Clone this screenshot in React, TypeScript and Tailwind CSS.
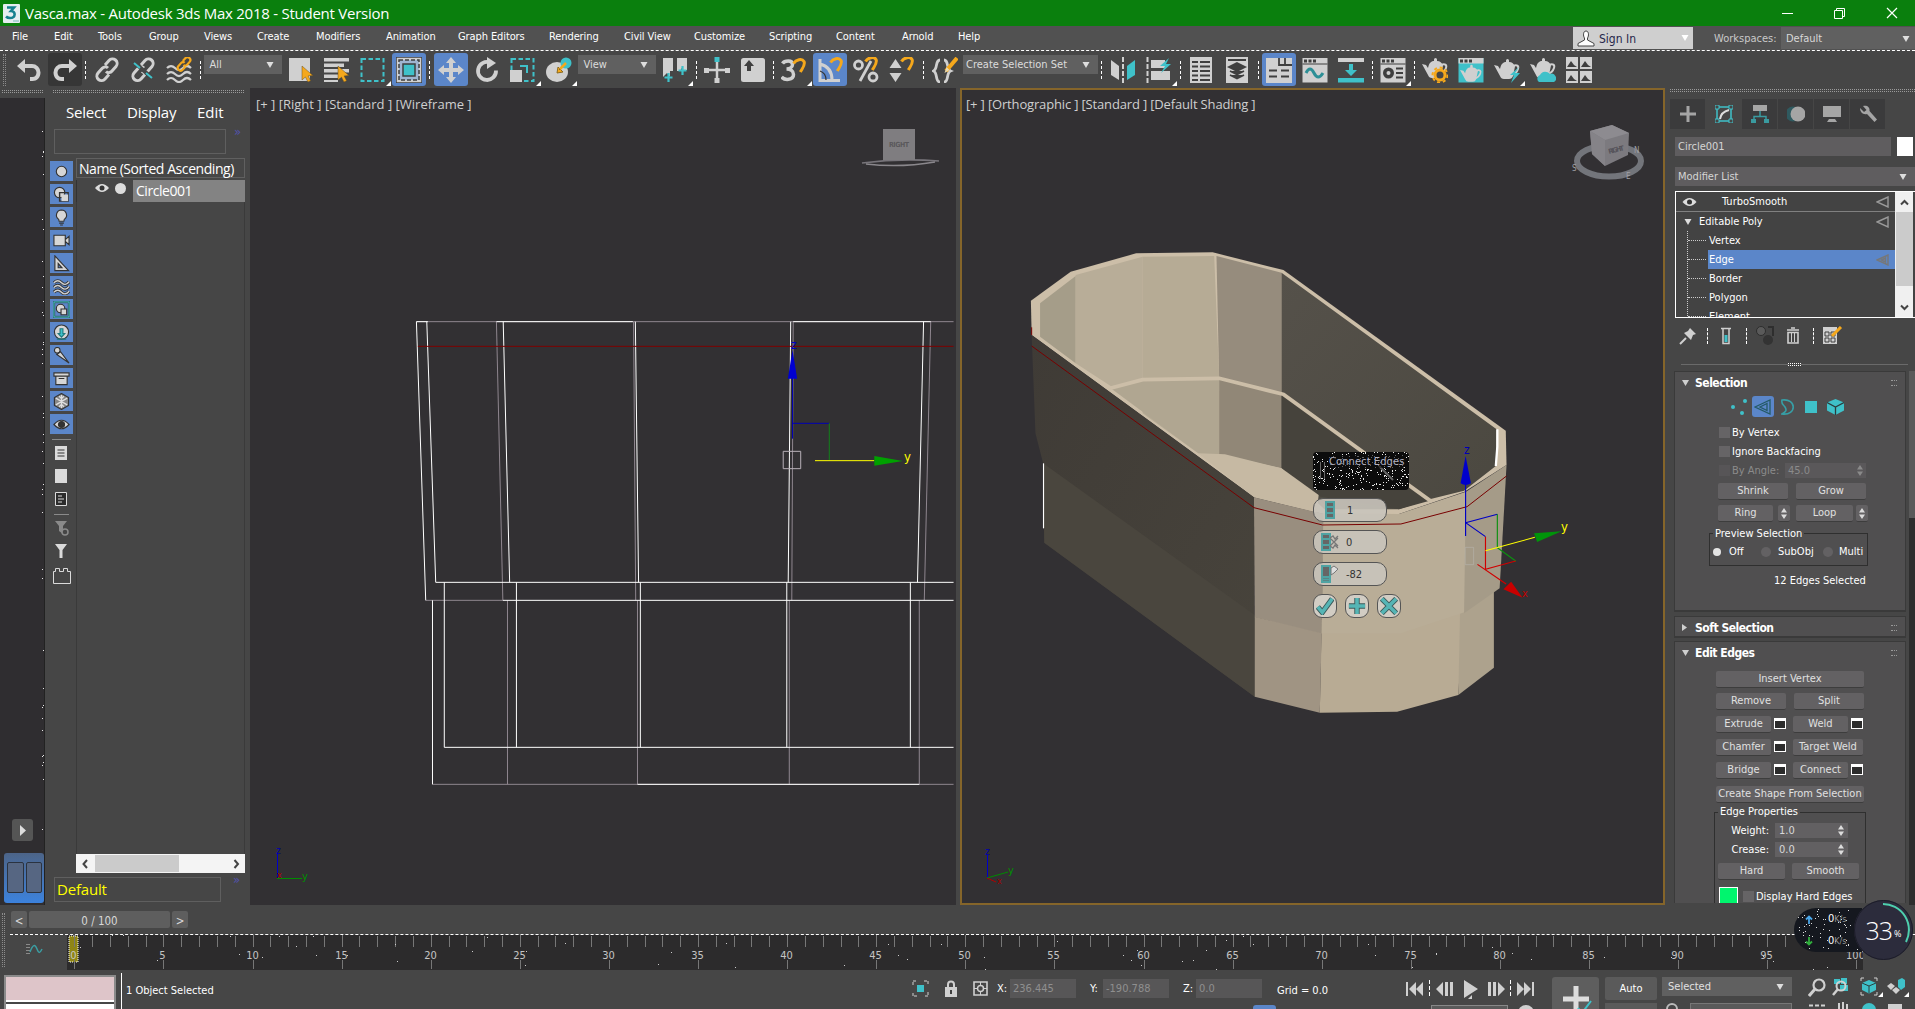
import React from "react";

type Kids = { children?: React.ReactNode; className?: string };

const G = "#d0d0d0";
const T = "#3fc1c9";
const O = "#f5a81c";
const D = "#3f3f3f";

/* ---------- toolbar helpers ---------- */

function Ico({ children, on, dark, fly }: { children: React.ReactNode; on?: boolean; dark?: boolean; fly?: boolean }) {
  return (
    <div className="relative flex w-9 shrink-0 items-center justify-center">
      <div
        className={
          "flex h-[33px] w-[34px] items-center justify-center rounded-[3px] " +
          (on ? "bg-[#5b86c9]" : dark ? "bg-[#363636]" : "")
        }
      >
        <svg width="26" height="26" viewBox="0 0 26 26" fill="none">
          {children}
        </svg>
      </div>
      {fly && (
        <svg className="absolute right-0 bottom-0" width="5" height="5" viewBox="0 0 5 5">
          <path d="M5 0V5H0Z" fill="#fff" />
        </svg>
      )}
    </div>
  );
}

function Sep({ className = "w-1.5" }: { className?: string }) {
  return (
    <div className={"flex shrink-0 justify-center " + className}>
      <div className="h-[18px] border-l border-dashed border-white" />
    </div>
  );
}

function Drop({ label, className }: { label: string; className: string }) {
  return (
    <div className={"mb-2.5 flex h-[19px] shrink-0 items-center justify-between bg-[#606060] pr-2 text-[#dcdcdc] " + className}>
      <span className="whitespace-nowrap">{label}</span>
      <Caret />
    </div>
  );
}

function Caret({ color = "#dedede" }: { color?: string }) {
  return (
    <svg width="8" height="6" viewBox="0 0 8 6" className="shrink-0">
      <path d="M0.5 0H7.5L4 6Z" fill={color} />
    </svg>
  );
}

const Cursor = () => <path d="M14 9v14l3.4-3 2.6 5 2.6-1.3-2.5-4.8 4.7-.5z" fill={O} stroke="#6b5220" strokeWidth=".5" />;
const Magnet = ({ x = 0, y = 0 }: { x?: number; y?: number }) => (
  <path
    transform={`translate(${x} ${y})`}
    d="M12.5 5.5C15 1.5 21 0 23 3.5c1.600 3.200-1 6-3.700 10.500"
    stroke={O}
    strokeWidth="3"
  />
);
const Teapot = ({ fill = G, y = 0 }: { fill?: string; y?: number }) => (
  <g transform={`translate(0 ${y})`}>
    <path d="M0 7l4 1 2 3C7 6 9 4 12 4V2.500a1.500 1.500 0 0 1 3 0V4c3 0 5 2 6 4.500L19 18q-1 3-4 3H10q-3 0-4-3z" fill={fill} />
    <path d="M19 8c4-2 6 0 5 3s-3 5-6 6" stroke={fill} strokeWidth="2" />
  </g>
);
const Chain = ({ color = G }: { color?: string }) => (
  <g stroke={color} strokeWidth="3">
    <path d="M11 8l4-4.500a4.500 4.500 0 0 1 7 6L18 14a4 4 0 0 1-6 .500" />
    <path d="M15 17.500l-4 4.500a4.500 4.500 0 0 1-7-6L8 11.500a4 4 0 0 1 6-.500" />
  </g>
);
const PanelTop = () => (
  <>
    <path d="M0.500 1h25v24.500h-25z" fill={G} />
    <path d="M2 2.500h3v3H2zM6.500 2.500h3v3h-3zM11 2.500h3v3h-3z" fill={D} />
    <path d="M0.500 7h25" stroke={D} />
  </>
);

function Toolbar() {
  return (
    <div className="flex h-[37px] shrink-0 items-center bg-[#464646]">
      <div className="ml-[3px] h-[32px] w-[3px] border-x border-dotted border-[#8c8c8c]" />
      <div className="w-[4.500px]" />
      <Ico><path d="M1 9l8-7v5h7a8.500 8.500 0 0 1 8.500 8.500c0 5-3.500 8.500-8 8.500H14v-4h2.500c2.500 0 4-2 4-4.500S18.500 11 16 11H9v5z" fill={G} /></Ico>
      <Ico dark><path d="M25 9l-8-7v5h-7A8.500 8.500 0 0 0 1.500 15.500c0 5 3.500 8.500 8 8.500H12v-4H9.500c-2.500 0-4-2-4-4.500S7.500 11 10 11h7v5z" fill={G} /></Ico>
      <Sep />
      <Ico><Chain /></Ico>
      <Ico><Chain /><path d="M4 5l18 16" stroke="#464646" strokeWidth="4" /><path d="M4 6l6 5M16 16l6 5" stroke={T} strokeWidth="2" /></Ico>
      <Ico>
        <path d="M1 11q4-4 8 0t8 0 8 0M1 17q4-4 8 0t8 0 8 0M1 23q4-4 8 0t8 0 8 0" stroke={G} strokeWidth="2.200" />
        <g transform="translate(10 -1) scale(.62)" stroke={O} strokeWidth="3.500"><path d="M11 8l4-4.500a4.500 4.500 0 0 1 7 6L18 14a4 4 0 0 1-6 .500M15 17.500l-4 4.500a4.500 4.500 0 0 1-7-6L8 11.500a4 4 0 0 1 6-.500" /></g>
      </Ico>
      <Sep className="w-[7px]" />
      <Drop label="All" className="mr-px w-[78px] pl-1.5" />
      <Ico><path d="M1 1h21v23H1z" fill={G} /><Cursor /></Ico>
      <Ico><path d="M0 1h25v3.500H0zM0 6.500h20V10H0zM0 12h25v3.500H0zM0 17.500h17V21H0zM0 23h14v2H0z" fill={G} /><Cursor /></Ico>
      <Ico fly><rect x="1.500" y="2" width="22" height="22" stroke={T} strokeWidth="2" strokeDasharray="4.500 2.500" /></Ico>
      <Ico on><rect x="0" y="0" width="26" height="26" fill={G} stroke={D} strokeWidth="1.500" /><rect x="3" y="3" width="20" height="20" fill="#9fb4d0" stroke={D} strokeWidth="1.500" strokeDasharray="4 2" /><rect x="7" y="7" width="12" height="12" fill={T} stroke={D} strokeWidth="1.500" /></Ico>
      <Sep />
      <Ico on><path d="M13 0l5 6h-3v5h5V8l6 5-6 5v-3h-5v5h3l-5 6-5-6h3v-5H6v3l-6-5 6-5v3h5V6H8z" fill={G} /></Ico>
      <Ico><path d="M16 5.500A9 9 0 1 0 22 13.500" stroke={G} strokeWidth="3.800" /><path d="M13 0l9 6-9 6z" fill={G} /></Ico>
      <Ico fly><rect x="1.500" y="2" width="22" height="22" stroke={T} strokeWidth="2" strokeDasharray="4.500 2.500" /><rect x="0" y="13" width="12" height="12" fill={G} /><path d="M10 9h7v7" stroke={T} strokeWidth="2" /></Ico>
      <Ico fly><ellipse cx="11" cy="15" rx="11" ry="10" fill={G} /><circle cx="20" cy="6" r="5.500" fill={T} /><path d="M20 6l-7 7M11 16l1-6 5 5z" stroke="#8a6a20" strokeWidth="1" fill={O} /><path d="M20 6l-6 6" stroke={O} strokeWidth="2.500" /></Ico>
      <Drop label="View" className="mr-[1.500px] ml-px w-[78px] pl-1.5" />
      <Ico fly><path d="M1 1h10v13H8v6l-3-4-4 4zM15 1h10v12h-4v-4l-3 5h-3z" fill={G} /><path d="M6.500 16v9M2.500 20.500h8M20.500 9v9M16.500 13.500h8" stroke={T} strokeWidth="2.200" /></Ico>
      <Sep />
      <Ico><path d="M13 5v16M3 13h20" stroke={G} strokeWidth="2.500" /><path d="M0 11h5v5H0zM21 11h5v5h-5zM10.500 21h5v5h-5z" fill={G} /><path d="M10.500 0h5v5h-5z" fill={T} /></Ico>
      <Ico><rect x="1" y="1" width="24" height="24" rx="2.500" fill={G} /><path d="M9 3l5 6h-3v5H7V9H4z" fill={D} /></Ico>
      <Sep className="w-[5px]" />
      <Ico fly><path d="M1.500 6.500c2-3 10-4 10 1 0 3-3 4.500-6 4.500 4 0 7 2 7 5.500 0 6-9 6-12 2.500" stroke={G} strokeWidth="3.500" /><Magnet y={1} /></Ico>
      <Ico on><path d="M3 2v21.500h20M3 7q12 3 12 16" stroke={G} strokeWidth="3" /><path d="M3 14q6 2 6 9" stroke="#333" strokeWidth="1.200" /><Magnet x={1} /></Ico>
      <Ico><circle cx="5.500" cy="8" r="4" stroke={G} strokeWidth="2.800" /><circle cx="20" cy="20" r="4" stroke={G} strokeWidth="2.800" /><path d="M18 4L7 24" stroke={G} strokeWidth="2.800" /><Magnet y={-1} /></Ico>
      <Ico><path d="M6.500 2l6 9h-12zM6.500 25l6-9h-12z" fill={G} /><Magnet y={-1} /></Ico>
      <Sep className="w-[7px]" />
      <Ico><path d="M8 3C3 3 6 12 1.500 14 6 16 3 25 8 25M12 3c5 0 2 9 6.500 11C14 16 17 25 12 25" stroke={G} strokeWidth="2.800" /><path d="M25 1L14 14" stroke={O} strokeWidth="4" /><path d="M14.500 10l-2 6 5-3z" fill="#e8d9b0" /></Ico>
      <Drop label="Create Selection Set" className="w-[135px] pl-[3px]" />
      <Sep className="w-[7px]" />
      <Ico><path d="M1 3l8 6v14l-8-5z" fill={G} /><path d="M13 0v26" stroke={G} strokeWidth="2" strokeDasharray="5 2" /><path d="M25 3l-8 6v14l8-5z" fill={T} /></Ico>
      <Ico fly><path d="M1.500 0v26" stroke={G} strokeWidth="2" strokeDasharray="5 2" /><path d="M5 3h14v8H5zM5 14h19v9H5z" fill={G} /><path d="M23 1l-9 8h5l-4 7 10-9h-5z" fill={T} /></Ico>
      <Sep />
      <Ico><path d="M2 0h22v26H2z" fill={G} /><path d="M4 5h6M12 5h10M4 9.500h6M12 9.500h10M4 14h6M12 14h10M4 18.500h6M12 18.500h10M4 23h6M12 23h10" stroke={D} strokeWidth="1.800" /></Ico>
      <Ico><path d="M2 0h22v26H2z" fill={G} /><path d="M4 3h18M13 6l8 4-8 4-8-4zM6 14l7 3.500L20 14M6 18l7 3.500L20 18" stroke={D} strokeWidth="1.800" fill={D} /></Ico>
      <Sep />
      <Ico on><path d="M0 1h26v25H0z" fill={G} /><path d="M13 1v7h13M19 1v7M3 13.500h8M15 13.500h8M3 19.500h8M15 19.500h8" stroke={D} strokeWidth="1.800" /></Ico>
      <Ico><PanelTop /><path d="M4 16q4-8 8 0 4 8 9 0" stroke="#2d8f96" strokeWidth="3" /></Ico>
      <Ico><path d="M0 1h26v4H0z" fill={G} /><path d="M0 21h26v4.500H0zM11 7h4v6h4l-6 6-6-6h4z" fill={T} /></Ico>
      <Sep />
      <Ico fly><PanelTop /><circle cx="8.500" cy="16" r="5.500" fill={D} /><circle cx="8.500" cy="16" r="2" fill={G} /><path d="M16 11.500h7M16 16h7M16 20.500h7" stroke={D} strokeWidth="2" /></Ico>
      <Sep />
      <Ico><Teapot /><circle cx="18" cy="18" r="5" stroke={O} strokeWidth="3" fill="#464646" /><circle cx="18" cy="18" r="7.500" stroke={O} strokeWidth="2" strokeDasharray="3 2.800" /></Ico>
      <Ico><path d="M0.500 1h25v24.500h-25z" fill={T} /><path d="M0.500 1h25v5.500h-25z" fill={G} /><path d="M2 2.500h3v3H2zM6.500 2.500h3v3h-3zM11 2.500h3v3h-3z" fill={D} /><g transform="translate(2 7) scale(.85)"><Teapot /></g></Ico>
      <Ico fly><Teapot y={1} /><path d="M25 10l-9 8h4l-3 8 9-10h-5z" fill={T} /></Ico>
      <Ico><Teapot /><path d="M9 25a4 4 0 0 1 1-7 6 6 0 0 1 10-1 4.500 4.500 0 0 1 4 8z" fill={T} /></Ico>
      <Ico><path d="M0 0h12v12H0zM14 0h12v12H14zM0 14h12v12H0zM14 14h12v12H14z" fill={G} /><path d="M1 10l4-6 3 4 3 2zM15 10l4-6 3 4 3 2zM1 24l4-6 3 4 3 2zM15 24l4-6 3 4 3 2z" fill={D} /></Ico>
    </div>
  );
}

/* ---------- title and menu ---------- */

function TitleBar() {
  return (
    <div className="flex h-[26px] shrink-0 items-center bg-[#0a7f0d] text-white">
      <svg width="17" height="19" viewBox="0 0 17 19" className="ml-[3px]">
        <rect width="17" height="19" rx="1" fill="#e4eef0" />
        <path d="M4 3.500h7l-3 3.500c5 0 5 7-1 7-2 0-3-.500-4-1.500" stroke="#15808f" strokeWidth="2.600" fill="none" />
        <path d="M10 17h6" stroke="#7bb" />
      </svg>
      <span className="ml-[5px] font-['Open_Sans','Noto_Sans',sans-serif] text-[15px] tracking-[-0.250px] whitespace-nowrap">
        Vasca.max - Autodesk 3ds Max 2018 - Student Version
      </span>
      <div className="mr-[17px] ml-auto flex items-center gap-[41px]">
        <svg width="11" height="11"><path d="M0 5.500h11" stroke="#fff" /></svg>
        <svg width="11" height="11" fill="none" stroke="#fff"><path d="M.5 2.500h8v8h-8zM2.500 2.500v-2h8v8h-2" /></svg>
        <svg width="12" height="12"><path d="M1 1l10 10M11 1L1 11" stroke="#fff" strokeWidth="1.200" /></svg>
      </div>
    </div>
  );
}

function MenuBar() {
  const items: [string, string][] = [
    ["File", "w-[42px]"], ["Edit", "w-[44px]"], ["Tools", "w-[51px]"], ["Group", "w-[55px]"], ["Views", "w-[53px]"],
    ["Create", "w-[59px]"], ["Modifiers", "w-[70px]"], ["Animation", "w-[72px]"], ["Graph Editors", "w-[91px]"],
    ["Rendering", "w-[75px]"], ["Civil View", "w-[70px]"], ["Customize", "w-[75px]"], ["Scripting", "w-[67px]"],
    ["Content", "w-[66px]"], ["Arnold", "w-[56px]"], ["Help", "w-[22px]"],
  ];
  return (
    <div className="flex h-[25px] shrink-0 items-center border-b border-dashed border-white bg-[#515151] pl-3 text-white">
      {items.map(([t, w]) => (
        <span key={t} className={"shrink-0 pb-0.5 tracking-[-0.100px] whitespace-nowrap " + w}>{t}</span>
      ))}
      <div className="mr-[21px] ml-auto flex h-[22px] w-[120px] items-center bg-[#cfcfcf] pl-1 text-[12px] text-[#26264a]">
        <svg width="18" height="17" viewBox="0 0 18 17" fill="#fff" stroke="#444" strokeWidth="1"><path d="M9 1c-3 0-3 5-1.500 7v2L1 13.500V16h16v-2.500L10.500 10V8C12 6 12 1 9 1z" /></svg>
        <span className="mt-0.5 ml-1">Sign In</span>
        <span className="mr-1 ml-auto"><Caret color="#fff" /></span>
      </div>
      <span className="mt-0.5 w-[67px] text-[#c9c9c9]">Workspaces:</span>
      <div className="flex h-[22px] w-[134px] items-center justify-between bg-[#606060] pt-0.5 pr-[5px] pl-[5px] text-[#d8d8d8]">
        Default <Caret />
      </div>
    </div>
  );
}

/* ---------- scene explorer ---------- */

const filterIcons: React.ReactNode[] = [
  <circle cx="9" cy="9" r="5.500" />,
  <><circle cx="7" cy="7" r="5.500" /><path d="M7 7h9v9H7z" fill="none" stroke="#333" strokeWidth="1.500" /><path d="M9 9h7v7H9z" stroke="none" /></>,
  <path d="M9 1a5.500 5.500 0 0 0-3 10l.5 2h5l.5-2a5.500 5.500 0 0 0-3-10zM6.500 15h5M7.500 17h3" />,
  <path d="M1 3.500h12v11H1zM13 8l4-3.500v9L13 10z" />,
  <path d="M2 1l14.500 15.500H2zM5.500 9v4.500h4z" fillRule="evenodd" />,
  <><path d="M1 5q4-4 8 0t8-1M1 10q4-4 8 0t8-1M1 15q4-4 8 0t8-1" fill="none" stroke="#333" strokeWidth="3.400" /><path d="M1 5q4-4 8 0t8-1M1 10q4-4 8 0t8-1M1 15q4-4 8 0t8-1" fill="none" stroke="#d0d0d0" strokeWidth="1.500" /></>,
  <><rect x="1" y="1" width="16" height="16" fill="#5b86c9" stroke="#333" strokeWidth="2.500" /><rect x="1" y="1" width="16" height="16" fill="none" stroke={T} strokeWidth="1.300" /><circle cx="8" cy="8" r="4.500" /><path d="M8.500 8.500h6v6h-6z" /></>,
  <><circle cx="9" cy="8.500" r="7.500" /><path d="M7.500 5h3v5h2L9 14l-3.500-4h2zM4 16h10" fill={T} stroke="#1f7a80" /></>,
  <><circle cx="4.500" cy="3.500" r="3" /><path d="M4 8l4-3 9 12z" /></>,
  <path d="M1 3h16v3.500H1zM3 6.500h12v9H3zM6 9h6" />,
  <><path d="M9 .5l7.500 4.300v8.400L9 17.500 1.500 13.200V4.800z" fill="#888" stroke="#333" /><path d="M9 2v14M3 5.500l12 7M15 5.500l-12 7M6.500 3.500L9 6l2.500-2.500M6.500 14.500L9 12l2.500 2.500" fill="none" stroke="#e0e0e0" strokeWidth="1.400" /></>,
  <><path d="M1 9q8-9 16 0-8 9-16 0z" /><circle cx="9" cy="9" r="3.200" fill="#333" /></>,
];

function Explorer() {
  return (
    <div className="flex w-[205px] shrink-0 flex-col bg-[#464646] text-white">
      <div className="mt-[2px] ml-2 h-[3px] w-[191px] border-y border-dotted border-[#9a9a9a]" />
      <div className="mt-[7px] mb-[2px] flex h-6 items-center gap-[21px] pl-[21px] text-[15px] font-['Open_Sans','Noto_Sans',sans-serif]">
        <span className="w-[40px] tracking-[-0.200px]">Select</span><span className="w-[49px] tracking-[-0.200px]">Display</span><span>Edit</span>
      </div>
      <div className="mt-[3px] flex h-[25px] pl-[9px]">
        <div className="w-[172px] border border-[#5f5f5f]" />
        <span className="-mt-1 ml-2 text-[13px] text-[#5252ac]">»</span>
      </div>
      <div className="mt-1 flex flex-1">
        <div className="flex w-[31px] flex-col items-start pt-[3px] pl-[5px]">
          {filterIcons.map((ic, i) => (
            <div key={i} className="mb-[3px] flex h-5 w-[23px] shrink-0 items-center justify-center bg-[#5b86c9]">
              <svg width="17" height="17" viewBox="0 0 18 18" fill="#d6d6d6" stroke="#333" strokeWidth="1.200">{ic}</svg>
            </div>
          ))}
          <div className="mt-[2px] ml-[2px] h-px w-[19px] bg-[#8a8a8a]" />
          <svg className="mt-[5px] ml-1" width="15" height="149" viewBox="0 0 15 149" fill="none">
            <path d="M1 1h12v14H1zM1 24h12v14H1z" fill="#dadada" />
            <path d="M3.500 5h7M3.500 8h7M3.500 11h7" stroke="#333" />
            <path d="M1.500 47.500h11v13h-11z" stroke="#dadada" fill="#2c2c2c" />
            <path d="M4 51h4M4 54h6M4 57h4" stroke="#dadada" />
            <path d="M0 69.500h15" stroke="#8a8a8a" />
            <path d="M1 76h12l-4 5v8l-4-3v-5z" fill="#8a8a8a" /><circle cx="11" cy="87" r="3" stroke="#8a8a8a" strokeWidth="1.500" fill="#464646" />
            <path d="M1 99h12L8.500 105v8h-3v-8z" fill="#dadada" />
          </svg>
          <svg className="-mt-[27px] ml-[3px]" width="18" height="18" viewBox="0 0 18 18" fill="none" stroke="#dadada"><path d="M.5 4.500h2v-3h4v3h4v-3h4v3h3v12h-17z" /></svg>
        </div>
        <div className="flex w-[169px] flex-col font-['Open_Sans','Noto_Sans',sans-serif]">
          <div className="flex h-5 items-center border border-[#606060] pt-px pl-[2px] text-[14px] tracking-[-0.430px] whitespace-nowrap">Name (Sorted Ascending)</div>
          <div className="mt-[2px] flex h-[22px] items-center border-l border-[#333]">
            <svg className="mb-1.5 ml-[18px]" width="14" height="10" viewBox="0 0 14 10"><path d="M0 5q7-8 14 0-7 8-14 0z" fill="#ddd" /><circle cx="7" cy="5" r="2.500" fill="#333" /></svg>
            <div className="mb-1.5 ml-[6px] h-[11px] w-[11px] rounded-full bg-[#dcdcdc]" />
            <div className="ml-auto flex h-full w-[112px] items-center bg-[#838383] pl-[3px] text-[14px] tracking-[-0.450px]">Circle001</div>
          </div>
          <div className="flex-1 border-x border-[#3a3a3a]" />
          <div className="flex h-[19px] items-center bg-[#f4f4f4] font-bold text-[#444]">
            <Chevron d="M5 1L1.500 5 5 9" className="ml-[6px] w-[13px]" />
            <div className="h-[17px] w-[84px] bg-[#cbcbcb]" />
            <Chevron d="M1.500 1L5 5 1.500 9" className="mr-[5px] ml-auto" />
          </div>
        </div>
      </div>
      <div className="mt-1 mb-[3px] flex h-[25px] pl-[9px]">
        <div className="flex w-[167px] items-center border border-[#5f5f5f] pb-px pl-[2px] font-['Open_Sans','Noto_Sans',sans-serif] text-[15px] tracking-[-0.200px] text-[#ffff00]">Default</div>
        <span className="-mt-1 ml-3 text-[13px] text-[#5252ac]">»</span>
      </div>
    </div>
  );
}

function Chevron({ d, className = "" }: { d: string; className?: string }) {
  return (
    <div className={className}>
      <svg width="7" height="10" viewBox="0 0 7 10" fill="none" stroke="#444" strokeWidth="2"><path d={d} /></svg>
    </div>
  );
}

function LayoutStrip() {
  return (
    <div className="flex w-[45px] shrink-0 flex-col bg-[#464646]">
      <div className="mt-[2px] ml-[2px] h-[3px] w-[41px] border-y border-dotted border-[#9a9a9a]" />
      <div className="relative mt-[5px] flex flex-1 flex-col items-end justify-end border-r border-[#222] bg-[#2f2d30]">
        <svg className="absolute top-0 right-0" width="2" height="750"><path d={speckles(44, 2, 750, 31)} fill="#e8e8e8" /></svg>
        <div className="mr-[11px] mb-[12px] flex h-[22px] w-[21px] items-center justify-center rounded-[3px] bg-[#555]">
          <svg width="6" height="11"><path d="M0 0l6 5.500L0 11z" fill="#ddd" /></svg>
        </div>
        <div className="mb-[2px] flex h-[50px] w-[40px] justify-center gap-[2px] rounded-[3px] bg-gradient-to-b from-[#4c6488] to-[#3b82dd] pt-[9px]">
          <div className="h-[31px] w-[17px] rounded-[2px] border border-[#2b3340] bg-[#566682]" />
          <div className="h-[31px] w-[16px] rounded-[2px] border border-[#2b3340] bg-[#566682]" />
        </div>
      </div>
    </div>
  );
}

/* ---------- viewports ---------- */

const vt = "font-['Open_Sans','Noto_Sans',sans-serif] text-[13px] text-[#cfcfcf] whitespace-nowrap";

function WireView() {
  return (
    <div className="relative w-[706px] shrink-0 overflow-hidden bg-[#323033]">
      <svg width="706" height="817" viewBox="250 88 706 817" fill="none" className="block">
        <g transform="translate(400 300) scale(.35714 .33333)" strokeWidth="1">
          <g stroke="#8f868f">
            {["M46 65H1550", "M270 65L288 901", "M654 65L660 901", "M1101 65L1097 901", "M1486 65L1468 901", "M72 901H288", "M301 901V1453", "M665 901V1453", "M1090 901V1453", "M1454 901V1453", "M91 1453H1550"].map((d) => (
              <path key={d} d={d} vectorEffect="non-scaling-stroke" />
            ))}
          </g>
          <g stroke="#fff">
            {["M46 65L72 901", "M46 65H78M270 65H652M1101 65H1486", "M75 65L100 847H1550", "M289 65L307 847", "M659 65L668 847", "M1094 65L1087 847", "M1466 65L1449 847", "M288 901H1550", "M91 901V1453", "M124 847V1342H1550", "M326 847V1342", "M673 847V1342", "M1083 847V1342", "M1429 847V1342", "M665 1453H1454"].map((d) => (
              <path key={d} d={d} vectorEffect="non-scaling-stroke" />
            ))}
          </g>
          <path d="M50 139H1550" stroke="#7d0000" vectorEffect="non-scaling-stroke" />
          <path d="M1073 454H1122V506H1073Z" stroke="#b8b0b8" vectorEffect="non-scaling-stroke" />
          <path d="M1099 416V230M1099 370H1202" stroke="#0000b4" vectorEffect="non-scaling-stroke" />
          <path d="M1202 370V480" stroke="#12801a" vectorEffect="non-scaling-stroke" />
          <path d="M1162 482H1328" stroke="#ffff00" vectorEffect="non-scaling-stroke" />
          <path d="M1099 150L1112 236H1086Z" fill="#0000d0" />
          <path d="M1408 483L1328 497V468Z" fill="#00a000" />
        </g>
        <text x="791" y="349" fill="#0000c8" fontSize="12">z</text>
        <text x="904" y="461" fill="#ffff00" fontSize="13">y</text>
        <path d="M277.500 878V853" stroke="#0000c8" /><path d="M277 878.500H302" stroke="#008c00" />
        <text x="276" y="854" fill="#0000a8" fontSize="10">z</text>
        <text x="277" y="878" fill="#b00000" fontSize="9">x</text>
        <text x="302" y="880" fill="#009000" fontSize="11">y</text>
        {/* view cube, seen face-on */}
        <path d="M862 163Q900 158 939 161" stroke="#77747a" strokeWidth="1.500" /><path d="M866 164Q900 168 935 162" stroke="#8a878c" strokeWidth="1.500" />
        <rect x="883" y="129" width="32" height="31" fill="#7f7d80" />
        <text x="889" y="147" fontSize="7" fill="#5a585b" textLength="20" fontWeight="bold">RIGHT</text>
      </svg>
      <div className={"absolute top-[9px] left-[6px] " + vt}>[+ ] [Right ] [Standard ] [Wireframe ]</div>
    </div>
  );
}

function speckles(n: number, w: number, h: number, seed: number) {
  let s = seed;
  const r = () => ((s = (s * 16807) % 2147483647) / 2147483647);
  let d = "";
  for (let i = 0; i < n; i++) d += `M${Math.floor(r() * w)} ${Math.floor(r() * h)}h1v1h-1z`;
  return d;
}

const pill = "flex h-6 w-[74px] items-center rounded-[10px] border border-[#555] bg-[#c9c4bb]/90 pl-1.5 text-[11px] text-[#333]";

function Caddy() {
  return (
    <div className="absolute top-[362px] left-[351px] flex w-[98px] flex-col">
      <div className="relative h-[38px] w-[96px] overflow-hidden rounded-[4px] bg-[#0c0c0c]">
        <svg className="absolute inset-0" width="96" height="38"><path d={speckles(300, 96, 38, 77)} fill="#e8e8e8" /><path d="M7.500 10v17M11.500 10v17" stroke="#666" /><path d="M66 14l14 14" stroke="#666" strokeWidth="2" /></svg>
        <div className="relative mt-[3px] ml-[16px] text-[11px] tracking-[0.100px] text-[#b4b4c4] whitespace-nowrap">
          <span className="bg-[#0c0c0c]/60">Connect Edges</span>
        </div>
      </div>
      <div className={"mt-[8px] " + pill}>
        <svg width="20" height="18" fill="#666" stroke="#4fa3a3"><path d="M6 1h8v16H6zM6 6h8M6 12h8" strokeWidth="2" /></svg>
        <span className="mt-px ml-[7px]">1</span>
      </div>
      <div className={"mt-[8px] " + pill}>
        <svg width="20" height="18" fill="#666" stroke="#4fa3a3"><path d="M2 1h8v16H2zM2 6h8M2 12h8" strokeWidth="2" /><path d="M10 5l3-2 2 3 3-3M10 13l3 2 2-3 3 3M10 5l4 4-4 4M18 5l-4 4 4 4" stroke="#777" fill="none" strokeWidth="1.300" /></svg>
        <span className="mt-px ml-1.5">0</span>
      </div>
      <div className={"mt-[8px] " + pill}>
        <svg width="20" height="18" fill="#666" stroke="#4fa3a3"><path d="M2 1h8v16H2zM2 12h8M2 14.500h8" strokeWidth="2" /><path d="M11 3l3-2 4 3-4 4-3 2z" stroke="#777" fill="#ddd" /></svg>
        <span className="mt-px ml-1.5">-82</span>
      </div>
      <div className="mt-[8px] flex gap-2">
        {["M2 11l5 6L18 2", "M10 1v18M1 10h18", "M2 2l16 16M18 2L2 18"].map((d) => (
          <div key={d} className="flex h-6 w-6 items-center justify-center rounded-[9px] border border-[#555] bg-[#d2cdc4]">
            <svg width="18" height="18" viewBox="0 0 20 20" fill="none"><path d={d} stroke="#3c5a5a" strokeWidth="6" /><path d={d} stroke="#56b5b5" strokeWidth="4" /></svg>
          </div>
        ))}
      </div>
    </div>
  );
}

function ShadedView() {
  return (
    <div className="relative w-[705px] shrink-0 overflow-hidden border-2 border-[#85652a] bg-[#323033]">
      <svg width="701" height="813" viewBox="962 90 701 813" fill="none" className="block">
        <defs>
          <linearGradient id="wall" x1="0" y1="0" x2="1" y2="1"><stop offset="0" stopColor="#3f3b36" /><stop offset="1" stopColor="#48443c" /></linearGradient>
          <linearGradient id="back" x1="0" y1="0" x2="1" y2="1"><stop offset="0" stopColor="#55514a" /><stop offset="1" stopColor="#4b4840" /></linearGradient>
        </defs>
        <g transform="translate(980 220) scale(.38265 .33333)">
          <path d="M133 242L237 155 408 100 608 97 793 150 1374 632 1376 735 1266 815 1095 882 900 882 716 832 135 345Z" fill="#ccbea8" />
          <path d="M157 250L250 168V430L157 350Z" fill="#a59d89" />
          <path d="M250 165L425 110V560L250 430Z" fill="#b8ad98" />
          <path d="M425 110L612 108 625 472V703L570 700 425 580Z" fill="#b6ab95" />
          <path d="M340 503L425 478H625V703H575Z" fill="#b0a691" />
          <path d="M618 108L788 158V520L625 475Z" fill="#968c7d" />
          <path d="M625 475L788 520V745L625 703Z" fill="#918777" />
          <path d="M788 158L1350 628 1348 738 1265 812 1175 838 1095 868 900 868 788 745Z" fill="url(#back)" />
          <path d="M788 522L1175 842 1095 868 890 830 788 745Z" fill="#46433c" />
          <path d="M570 700L640 703 788 745 885 825 880 878 716 832Z" fill="#c6b9a3" />
          <path d="M340 505L425 479 625 475 793 523 1180 845" stroke="#ccbea8" strokeWidth="11" />
          <path d="M1352 628V680L1348 738" stroke="#fff" strokeWidth="6" />
          <path d="M135 345L716 832 718 1430 168 968 165 730 145 640Z" fill="url(#wall)" />
          <path d="M165 730L718 1185V1430L168 968Z" fill="#4a463e" />
          <path d="M716 832L898 882 893 1242 718 1192Z" fill="#998e7f" />
          <path d="M893 1200H1100L1255 1140 1262 1180 1250 1425 1090 1475 888 1478Z" fill="#b8ab94" />
          <path d="M1255 1150L1343 1095V1343L1250 1425Z" fill="#ada28d" />
          <path d="M897 880L1095 882 1270 815V1175L1100 1240H893Z" fill="#b9ad97" />
          <path d="M1270 815L1376 735 1370 860 1358 1105 1265 1180Z" fill="#a59b88" />
          <path d="M718 1190L893 1240 888 1478 718 1430Z" fill="#a09483" />
          <path d="M135 322V345M135 378L716 863 895 915 1100 912 1273 860 1376 768" stroke="#780000" strokeWidth="1" vectorEffect="non-scaling-stroke" />
          <path d="M166 730V925" stroke="#fff" strokeWidth="3" />
          <path d="M1268 982H1290V1034H1268Z" stroke="#b5b0a8" strokeWidth="2" />
          <path d="M1269 948V790M1269 908L1352 883M1269 908L1321 950" stroke="#0000c4" strokeWidth="3" />
          <path d="M1352 883V983L1400 1023" stroke="#0c9010" strokeWidth="3" />
          <path d="M1321 950V1048L1400 1023M1300 1033L1375 1092" stroke="#d00000" strokeWidth="3" />
          <path d="M1321 992L1450 952" stroke="#ffff00" strokeWidth="3" />
          <path d="M1269 708L1283 790Q1269 800 1256 790Z" fill="#0000cc" />
          <path d="M1520 934L1448 940 1456 966Z" fill="#00940a" />
          <path d="M1418 1133L1368 1108 1388 1085Z" fill="#c80000" />
        </g>
        <text x="1464" y="454" fill="#0000b4" fontSize="12">z</text>
        <text x="1561" y="531" fill="#ffff00" fontSize="13">y</text>
        <text x="1522" y="597" fill="#c00000" fontSize="11">x</text>
        <path d="M987.500 878V855" stroke="#0000c8" /><path d="M987 878L1008 872" stroke="#008c00" /><path d="M987 878L996 882" stroke="#b00000" />
        <text x="985" y="855" fill="#0000a8" fontSize="10">z</text>
        <text x="997" y="884" fill="#a00000" fontSize="9">x</text>
        <text x="1008" y="874" fill="#009000" fontSize="11">y</text>
        <ellipse cx="1609" cy="161" rx="32" ry="15.500" stroke="#73757b" strokeWidth="6" />
        <path d="M1590 131L1612 125 1629 133 1628 155 1605 166 1592 154Z" fill="#7c7a7f" />
        <path d="M1590 131L1612 125 1629 133 1605 140Z" fill="#8d8b90" />
        <path d="M1605 140V166L1592 154 1590 131Z" fill="#858388" />
        <text x="1609" y="154" fontSize="7" fill="#55535a" textLength="16" fontWeight="bold" transform="rotate(-14 1609 154)">RIGHT</text>
        <text x="1572" y="171" fontSize="8" fill="#a0a0a5">S</text><text x="1626" y="179" fontSize="8" fill="#a0a0a5">E</text><text x="1634" y="153" fontSize="8" fill="#a0a0a5">N</text>
      </svg>
      <div className={"absolute top-[7px] left-[4px] tracking-[-0.160px] " + vt}>[+ ] [Orthographic ] [Standard ] [Default Shading ]</div>
      <Caddy />
    </div>
  );
}

/* ---------- command panel ---------- */

function Btn({ children, className = "" }: Kids) {
  return (
    <div className={"flex h-[17px] shrink-0 items-center justify-center rounded-[2px] border-b border-[#3d3d3d] bg-[#636163] text-[#e0e0e0] whitespace-nowrap " + className}>
      {children}
    </div>
  );
}

function Spin({ dim }: { dim?: boolean }) {
  return (
    <svg width="6" height="11" viewBox="0 0 6 11" fill={dim ? "#8a8a8a" : "#dcdcdc"} className="shrink-0"><path d="M0 4.500L3 0l3 4.500zM0 6.500L3 11l3-4.500z" /></svg>
  );
}

function SettingBox() {
  return <div className="mb-[3px] ml-[3px] h-[11px] w-[12px] border border-t-[3px] border-white bg-[#2c2c2c]" />;
}

function Rollout({ title, open, className = "", children }: { title: string; open?: boolean; className?: string; children?: React.ReactNode }) {
  return (
    <div className={"flex w-[232px] shrink-0 flex-col border border-b-2 border-[#3a3a3a] bg-[#504f50] " + className}>
      <div className="flex h-[20px] shrink-0 items-center pt-px pr-2 pl-[7px] text-[12px] font-bold">
        <div className="w-[13px]">
          {open ? <svg width="7" height="6"><path d="M0 0h7L3.500 6z" fill="#cfcfcf" /></svg> : <svg width="6" height="7"><path d="M0 0v7l5-3.500z" fill="#cfcfcf" /></svg>}
        </div>
        <span className="tracking-[-0.480px]">{title}</span>
        <div className="ml-auto h-[6px] w-[6px] border-y border-dotted border-[#999]" />
      </div>
      {children}
    </div>
  );
}

const Tri = ({ on }: { on?: boolean }) => (
  <svg width="13" height="12" viewBox="0 0 13 12" fill="none" stroke={on ? "#777" : "#9a9a9a"} strokeWidth="1.400" className="mr-[6px] ml-auto"><path d="M1 6l11-5v10z" />{on && <path d="M5.500 6l4-2v4z" />}</svg>
);

function Check({ label, dim, className = "" }: { label: string; dim?: boolean; className?: string }) {
  return (
    <div className={"flex h-[19px] items-center " + className}>
      <div className={"mr-[2px] ml-px h-[11px] w-[11px] " + (dim ? "bg-[#575557]" : "bg-[#666466]")} />
      <span className={dim ? "text-[#8b8b8b]" : ""}>{label}</span>
    </div>
  );
}

function VSep() {
  return <div className="h-4 border-l border-dashed border-white" />;
}

function CommandPanel() {
  const tabs: React.ReactNode[] = [
    <path d="M9 1v16M1 9h16" stroke="#a5a5a5" strokeWidth="3" />,
    <><path d="M2 2h14v14H2z" stroke={T} strokeWidth="1.500" /><path d="M0 0h4v4H0zM14 0h4v4h-4zM0 14h4v4H0zM14 14h4v4h-4z" fill="#464646" stroke={T} /><path d="M5 14q1-7 9-9" stroke="#ddd" strokeWidth="2" /></>,
    <><path d="M9 6v6M3 15v-3.500h12V15" stroke="#3a9ba0" strokeWidth="1.500" /><path d="M2 0h14v6H2z" fill="#a5a5a5" /><path d="M0 14h5v4H0zM13 14h5v4h-5z" fill="#3a9ba0" /></>,
    <><circle cx="6" cy="9" r="7.500" fill="#2f5a60" /><circle cx="11" cy="9" r="7.500" fill="#a5a5a5" /></>,
    <path d="M0 1h18v11H0zM6 14h6l2 3H4z" fill="#a5a5a5" />,
    <path d="M1 3l4 4 2.500-2L4 1c4-1 7 1 6.500 5L18 14.500 15.500 17 8 9c-4 1-7-2-7-6z" fill="#a5a5a5" />,
  ];
  return (
    <div className="flex w-[250px] shrink-0 flex-col overflow-hidden bg-[#464646] pl-[5px] text-white">
      <div className="mt-[1px] h-[3px] shrink-0 border-y border-dotted border-[#9a9a9a]" />
      <div className="mt-[7px] flex h-[30px] shrink-0 gap-px">
        {tabs.map((t, i) => (
          <div key={i} className={"flex h-[30px] w-[35px] items-center justify-center " + (i === 1 ? "bg-[#464646]" : "bg-[#3b3b3c]")}>
            <svg width="18" height="18" viewBox="0 0 18 18" fill="none">{t}</svg>
          </div>
        ))}
      </div>
      <div className="mt-2 ml-[5px] flex h-[19px] shrink-0">
        <div className="flex w-[216px] items-center bg-[#5f5d5f] pl-[3px] text-[#d5d5d5]">Circle001</div>
        <div className="ml-[6px] w-4 bg-white" />
      </div>
      <div className="mt-[11px] ml-[5px] flex h-[19px] shrink-0 items-center justify-between bg-[#5f5d5f] pr-[8px] pl-[3px] text-[#d5d5d5]">Modifier List <Caret /></div>
      <div className="mt-[5px] ml-[5px] flex h-[127px] shrink-0 border border-r-0 border-white bg-[#434343]">
        <div className="flex w-[219px] flex-col overflow-hidden">
          <div className="flex h-[20px] shrink-0 items-center border-b border-[#808080]">
            <svg className="ml-[6px]" width="15" height="10" viewBox="0 0 14 10"><path d="M0 5q7-8 14 0-7 8-14 0z" fill="#ddd" /><circle cx="7" cy="5" r="2.500" fill="#333" /></svg>
            <span className="ml-[25px]">TurboSmooth</span><Tri />
          </div>
          <div className="flex h-[19px] shrink-0 items-center"><span className="ml-2"><Caret /></span><span className="ml-[7px]">Editable Poly</span><Tri /></div>
          <div className="ml-[11px] shrink-0 border-l border-dotted border-[#ccc]">
            {["Vertex", "Edge", "Border", "Polygon", "Element"].map((n) => (
              <div key={n} className="flex h-[19px] items-center">
                <div className="w-[20px] shrink-0 pr-[2px]"><div className="border-t border-dotted border-[#ccc]" /></div>
                <div className={"flex h-full flex-1 items-center pl-px " + (n === "Edge" ? "bg-[#5b86c9]" : "")}>{n}{n === "Edge" && <Tri on />}</div>
              </div>
            ))}
          </div>
        </div>
        <div className="flex w-[18px] flex-col items-center bg-[#f0f0f0]">
          <svg className="mt-[7px]" width="9" height="7" fill="none" stroke="#444" strokeWidth="2"><path d="M1 5.500L4.500 2 8 5.500" /></svg>
          <div className="mt-[6px] h-[74px] w-[17px] bg-[#cbcbcb]" />
          <svg className="mt-auto mb-[6px]" width="9" height="7" fill="none" stroke="#444" strokeWidth="2"><path d="M1 1.500L4.500 5 8 1.500" /></svg>
        </div>
      </div>
      <div className="ml-[9px] flex h-[35px] shrink-0 items-center">
        <svg width="18" height="18" fill="none"><path d="M11 1l6 6-3 1-2 5-7-7 4-2z" fill={G} /><path d="M7 11l-6 6" stroke={G} strokeWidth="2" /></svg>
        <div className="w-[19px] pl-[10px]"><VSep /></div>
        <svg width="20" height="18" fill="none"><path d="M5 1.500h10M7 1v15.500h6V1" stroke={G} strokeWidth="1.500" /><path d="M8.500 8h3v7h-3z" fill={T} /></svg>
        <div className="w-[20px] pl-[10px]"><VSep /></div>
        <svg width="20" height="20" fill="none"><circle cx="5" cy="5" r="4.500" fill="#5a5a5a" stroke="#2e2e2e" /><circle cx="12" cy="14" r="5" fill="#333" /><path d="M12 1h5v9" stroke="#2e2e2e" strokeWidth="2" /></svg>
        <svg className="ml-[10px]" width="14" height="17" fill="none"><path d="M1 3h12M5 1h4M2 5.500v10.500h10V5.500z" stroke={G} strokeWidth="1.600" /><path d="M5.500 6v9M8.500 6v9" stroke={G} /></svg>
        <div className="w-[23px] pl-[13px]"><VSep /></div>
        <svg width="20" height="19" fill="none"><path d="M0 1h14v17H0z" fill={G} /><path d="M2 6h4v4H2zM8 6h4v4H8zM2 12h4v4H2zM8 12h4v4H8z" stroke={D} /><path d="M18 1L9 10" stroke={O} strokeWidth="3" /></svg>
      </div>
      <div className="mt-[10px] mb-[5px] ml-[11px] flex shrink-0 items-center">
        <div className="h-px w-[107px] bg-[#6a6a6a]" /><div className="h-[3px] w-[13px] border-y border-dotted border-white" /><div className="h-px w-[107px] bg-[#6a6a6a]" />
      </div>
      <div className="flex min-h-0 flex-1">
        <div className="mb-[2px] ml-[4px] flex w-[235px] flex-col overflow-hidden">
          <Rollout title="Selection" open className="h-[241px]">
            <div className="mt-px ml-[55px] flex h-[27px] shrink-0 items-center">
              <svg width="22" height="18" fill={T}><circle cx="3" cy="9" r="2" /><circle cx="15" cy="3" r="2" /><circle cx="12" cy="15" r="2" /></svg>
              <div className="flex h-[21px] w-[22px] items-center justify-center rounded-[3px] bg-[#5b86c9]">
                <svg width="18" height="16" fill="none" stroke="#245a66" strokeWidth="1.300"><path d="M1 8l15-7v14zM6 8l7-3.500v7z" /></svg>
              </div>
              <svg className="ml-[7px]" width="14" height="16" fill="none" stroke="#379fa6" strokeWidth="1.600"><path d="M1 1c15-2 15 16 0 14 4-2 5-4 3-7s-4-3-3-7z" /></svg>
              <div className="ml-[10px] h-3 w-3 bg-[#3fc1c9]" />
              <svg className="ml-[10px]" width="17" height="16"><path d="M8.500 0L17 3.500v8L8.500 16 0 11.500v-8z" fill={T} /><path d="M0 3.500L8.500 8 17 3.500M8.500 8v8" stroke="#2c3c3d" strokeWidth="1.300" fill="none" /></svg>
            </div>
            <div className="ml-[43px] flex shrink-0 flex-col pt-[3px]">
              <Check label="By Vertex" />
              <Check label="Ignore Backfacing" />
              <div className="flex items-center">
                <Check label="By Angle:" dim />
                <div className="mr-[39px] ml-auto flex h-[15px] w-[81px] items-center justify-between bg-[#5a585a] pr-[3px] pl-[3px] text-[#8b8b8b]">45.0 <Spin dim /></div>
              </div>
              <div className="mt-[3px] flex gap-2"><Btn className="w-[70px]">Shrink</Btn><Btn className="w-[70px]">Grow</Btn></div>
              <div className="mt-[5px] flex">
                <Btn className="w-[55px]">Ring</Btn><Btn className="ml-[5px] w-[12px]"><Spin /></Btn>
                <Btn className="ml-[6px] w-[57px]">Loop</Btn><Btn className="ml-[3px] w-[12px]"><Spin /></Btn>
              </div>
            </div>
            <div className="relative mt-[11px] ml-[34px] flex h-[33px] w-[159px] shrink-0 items-center border border-[#2f2f2f] pt-[5px]">
              <span className="absolute -top-[7px] left-[3px] bg-[#504f50] px-[2px]">Preview Selection</span>
              <div className="ml-[3px] h-[8px] w-[8px] rounded-full bg-[#e4e4e4]" /><span className="ml-[8px] w-[32px]">Off</span>
              <div className="h-[10px] w-[10px] rounded-full bg-[#636163]" /><span className="ml-[7px] w-[45px]">SubObj</span>
              <div className="h-[10px] w-[10px] rounded-full bg-[#636163]" /><span className="ml-[6px]">Multi</span>
            </div>
            <div className="mt-[8px] ml-[99px] whitespace-nowrap">12 Edges Selected</div>
          </Rollout>
          <Rollout title="Soft Selection" className="mt-[4px] h-[22px]" />
          <Rollout title="Edit Edges" open className="mt-[3px] h-[300px]">
            <div className="ml-[41px] flex w-[148px] shrink-0 flex-col pt-[9px]">
              <Btn>Insert Vertex</Btn>
              <div className="mt-[5px] flex justify-between"><Btn className="w-[70px]">Remove</Btn><Btn className="w-[70px]">Split</Btn></div>
              <div className="mt-[6px] flex items-center"><Btn className="w-[55px]">Extrude</Btn><SettingBox /><Btn className="ml-[7px] w-[55px]">Weld</Btn><SettingBox /></div>
              <div className="mt-[6px] flex items-center"><Btn className="w-[55px]">Chamfer</Btn><SettingBox /><Btn className="ml-[7px] w-[70px]">Target Weld</Btn></div>
              <div className="mt-[6px] flex items-center"><Btn className="w-[55px]">Bridge</Btn><SettingBox /><Btn className="ml-[7px] w-[55px]">Connect</Btn><SettingBox /></div>
              <Btn className="mt-[7px]">Create Shape From Selection</Btn>
            </div>
            <div className="relative mt-[9px] ml-[39px] flex h-[110px] w-[152px] shrink-0 flex-col border border-[#2f2f2f] pt-[8px]">
              <span className="absolute -top-[8px] left-[3px] bg-[#504f50] px-[2px]">Edge Properties</span>
              <div className="flex h-[19px] items-center"><span className="w-[54px] text-right">Weight:</span><div className="ml-[6px] flex h-[15px] w-[73px] items-center justify-between bg-[#626062] px-[4px] text-[#d8d8d8]">1.0 <Spin /></div></div>
              <div className="flex h-[19px] items-center"><span className="w-[54px] text-right">Crease:</span><div className="ml-[6px] flex h-[15px] w-[73px] items-center justify-between bg-[#626062] px-[4px] text-[#d8d8d8]">0.0 <Spin /></div></div>
              <div className="mt-[4px] ml-[3px] flex gap-[7px]"><Btn className="w-[67px]">Hard</Btn><Btn className="w-[67px]">Smooth</Btn></div>
              <div className="mt-[7px] ml-[4px] flex items-center">
                <div className="h-[19px] w-[19px] border border-white bg-[#00f56e]" />
                <Check label="Display Hard Edges" className="ml-1 whitespace-nowrap" />
              </div>
            </div>
          </Rollout>
        </div>
        <div className="flex w-[6px] flex-col bg-[#2e2e2e]"><div className="h-[147px] bg-[#5a5a5a]" /></div>
      </div>
    </div>
  );
}

/* ---------- timeline and status ---------- */

function Timeline() {
  const x = (f: number) => Math.round(7.300 + f * 17.820) + 0.5;
  const frames = Array.from({ length: 101 }, (_, i) => i);
  return (
    <div className="relative flex h-[66px] shrink-0 bg-[#464646]">
      <div className="mt-2 ml-[2px] h-[54px] w-[3px] border-x border-dotted border-[#8c8c8c]" />
      <div className="flex flex-1 flex-col">
        <div className="mt-[6px] ml-[6px] flex h-[18px] gap-[2px] pb-px text-[11.500px] text-[#d8d8d8]">
          <div className="flex w-4 items-center justify-center rounded-[2px] bg-[#5e5e5e] pt-0.5">&lt;</div>
          <div className="flex w-[141px] items-center justify-center rounded-[2px] bg-[#5e5e5e] pt-0.5">0 / 100</div>
          <div className="flex w-4 items-center justify-center rounded-[2px] bg-[#5e5e5e] pt-0.5">&gt;</div>
        </div>
        <div className="mt-[5px] ml-[5px] border-t border-dashed border-white" />
        <div className="flex h-[36px]">
          <div className="w-[62px] pt-[8px] pl-[21px]">
            <svg width="18" height="12" fill="none"><path d="M0 1.500h4M0 4.500h4M0 7.500h4M0 10.500h4" stroke="#8a8a8a" /><path d="M4 9c3-8 5-8 7-3s3 4 5 0" stroke="#3b9ea3" strokeWidth="1.500" /></svg>
          </div>
          <svg width="1796" height="35" viewBox="0 0 1796 35" className="bg-[#2c2b2c]">
            <rect x="2" y="1" width="9" height="26" fill="#8f8515" stroke="#fff" strokeDasharray="1 1" />
            {frames.map((f) => (
              <path key={f} d={f % 5 === 0 ? `M${x(f)} 0V12M${x(f)} 25V34` : `M${x(f)} 1V12`} stroke="#777" />
            ))}
            {frames.filter((f) => f % 5 === 0).map((f) => (
              <text key={f} x={f === 0 ? 6.500 : x(f) - 1} y="23.500" fontSize="11" textAnchor="middle" fill="#c4c4c4">{f}</text>
            ))}
            <path d={speckles(60, 1796, 35, 991)} fill="#ccc" />
          </svg>
        </div>
      </div>
      <NetMeter />
    </div>
  );
}

function NetMeter() {
  return (
    <div className="absolute -top-[5px] right-[2px] z-10 flex items-center">
      <div className="relative -mr-[8px] flex h-[44px] w-[68px] flex-col justify-between overflow-hidden rounded-l-[22px] bg-[#15181f] py-[4px] pl-[11px]">
        <svg className="absolute inset-0" width="68" height="44"><path d={speckles(70, 68, 44, 5)} fill="#ddd" /></svg>
        <div className="relative flex items-center text-[11px] text-white"><NetArrow up /><span className="bg-[#15181f]">0</span><span className="text-[9px] text-[#999]">K/s</span></div>
        <div className="relative flex items-center text-[11px] text-white"><NetArrow /><span className="bg-[#15181f]">0</span><span className="text-[9px] text-[#999]">K/s</span></div>
      </div>
      <div className="relative flex h-[60px] w-[59px] items-center justify-center rounded-full bg-[#2c2c3c] font-['Open_Sans',sans-serif] text-white">
        <svg className="absolute inset-0" width="59" height="60" fill="none"><ellipse cx="29.500" cy="30" rx="29" ry="29.500" stroke="#1c1c28" /><path d="M29 4a26 26 0 0 1 23 38" stroke="#4ecfae" strokeWidth="2" /></svg>
        <span className="text-[25px] font-light tracking-[-1px]">33</span><span className="mt-2 ml-0.5 text-[9px]">%</span>
      </div>
    </div>
  );
}

function NetArrow({ up }: { up?: boolean }) {
  return (
    <svg className="mr-[15px]" width="8" height="9" fill="none" stroke={up ? "#4aa6e8" : "#2fae3c"} strokeWidth="1.800">
      <path d={up ? "M4 9V2M1 4.500L4 1.500 7 4.500" : "M4 0v7M1 4.500L4 7.500 7 4.500"} />
    </svg>
  );
}

function Coord({ label, value, className = "" }: { label: string; value: string; className?: string }) {
  return (
    <div className={"flex items-center " + className}>
      <span className="w-[13px]">{label}</span>
      <div className="flex h-[19px] w-[66px] items-center bg-[#575657] pt-px pl-[3px] text-[#8f8f8f]">{value}</div>
    </div>
  );
}

function StatusBar() {
  return (
    <div className="flex h-[38px] shrink-0 items-start overflow-hidden bg-[#464646] text-white">
      <div className="mt-[4px] ml-[4px] w-[112px] border-2 border-b-0 border-[#8a8a8a]">
        <div className="h-[25px] border-b-2 border-white bg-[#dec5c9]" />
        <div className="mt-[2px] h-[10px] bg-white" />
      </div>
      <div className="mt-[2px] ml-[5px] h-[36px] w-px bg-white" />
      <span className="mt-[13px] ml-[4px] w-[786px]">1 Object Selected</span>
      <svg className="mt-[9px]" width="17" height="17" fill="none"><path d="M1 5V1h4M12 1h4v4M16 12v4h-4M5 16H1v-4" stroke={G} strokeDasharray="3 1" /><path d="M5 5h7v7H5z" fill={T} /></svg>
      <svg className="mt-[9px] ml-[16px]" width="12" height="17" fill="none"><path d="M3 8V4.500C3 .500 9 .500 9 4.500V8" stroke={G} strokeWidth="2" /><path d="M0 7h12v10H0z" fill={G} /><path d="M6 10v4" stroke={D} strokeWidth="2" /></svg>
      <svg className="mt-[10px] ml-[16px]" width="15" height="15" fill="none" stroke={G}><path d="M1 1h13v13H1z" strokeWidth="1.600" /><circle cx="7.500" cy="7.500" r="3" strokeWidth="1.500" /><path d="M1 7.500h3M11 7.500h3M7.500 1v3M7.500 11v3" /></svg>
      <Coord label="X:" value="236.445" className="mt-[8px] ml-[9px]" />
      <Coord label="Y:" value="-190.788" className="mt-[8px] ml-[14px]" />
      <Coord label="Z:" value="0.0" className="mt-[8px] ml-[14px]" />
      <div className="flex w-[144px] flex-col">
        <span className="mt-[13px] ml-[15px]">Grid = 0.0</span>
        <div className="mt-[7px] -ml-[9px] h-4 w-[23px] rounded-[3px] bg-[#5b86c9]" />
      </div>
      <div className="flex w-[146px] flex-col">
        <svg className="mt-[8px]" width="130" height="20" fill={G}>
          <path d="M0 3h2v14H0zM10 3v14L3 10zM17 3v14l-7-7zM37 3v14l-7-7zM39 3h3v14h-3zM44 3h3v14h-3zM58 1v18l14-9zM82 3h3v14h-3zM87 3h3v14h-3zM92 3v14l7-7zM111 3v14l7-7zM118 3v14l7-7zM126 3h2v14h-2zM66 20h-4l4-4z" />
          <path d="M23.500 1v18M104.500 1v18" stroke="#fff" strokeDasharray="4 2" />
        </svg>
        <div className="mt-[6px] ml-[25px] flex items-start">
          <div className="h-2 w-[77px] border border-[#888] bg-[#5a5a5a]" /><div className="ml-[10px] h-4 w-4 rounded-full bg-[#d0d0d0]" />
        </div>
      </div>
      <div className="mt-[6px] flex h-10 w-[47px] justify-center rounded-[3px] bg-[#5e5e5e] pt-[9px]">
        <svg width="36" height="30" fill="none"><path d="M18 0v26M5 13h26" stroke="#ddd" strokeWidth="5" /><path d="M20 22l4 5 9-12" stroke={T} strokeWidth="2" /></svg>
      </div>
      <div className="mt-[6px] ml-[6px] w-[52px]">
        <div className="flex h-[23px] items-center justify-center rounded-[2px] bg-[#5a5a5a] pt-px">Auto</div>
        <div className="mt-[3px] h-4 bg-[#5a5a5a]" />
      </div>
      <div className="mt-[6px] ml-[5px] w-[130px]">
        <div className="flex h-[19px] items-center justify-between bg-[#606060] pr-[8px] pl-[6px] text-[#e0e0e0]"><span className="pt-px">Selected</span><Caret /></div>
        <div className="mt-[7px] flex gap-3"><div className="ml-1 h-4 w-3 rounded-full border-2 border-[#bbb]" /><div className="h-4 flex-1 border border-[#777] bg-[#5a5a5a]" /></div>
      </div>
      <svg className="mt-[6px] ml-[16px]" width="104" height="32" fill="none">
        <circle cx="11" cy="8" r="5.500" stroke={G} strokeWidth="2.200" /><path d="M7 12l-6 7" stroke={G} strokeWidth="3" />
        <path d="M33 1h6v6h-6zM32 8h8v6h-8zM26 2h6v5h-6z" fill={T} /><circle cx="33" cy="9" r="4.500" stroke={G} strokeWidth="2" /><path d="M30 12l-5 6" stroke={G} strokeWidth="2.500" />
        <path d="M61 3l7 3v7l-7 3.500-7-3.500V6z" fill={T} /><path d="M54 6l7 3 7-3M61 9v7" stroke="#2c3c3d" /><path d="M53 4V1h3M66 1h3v3M69 15v3h-3M56 18h-3v-3" stroke={G} />
        <path d="M90 3l4-2 3 2v7l-4 3-3-3z" fill={T} /><path d="M83 6l4 3-4 4-4-4zM88 10l4 3-4 4-4-4z" fill={G} />
        <path d="M75 15v5h-5zM101 15v5h-5z" fill="#fff" />
        <path d="M1 28.500h16" stroke={G} strokeWidth="2" strokeDasharray="4 2" /><path d="M30 26h2v6h-2zM34 25h2v7h-2zM38 27h2v5h-2z" fill={G} /><circle cx="61" cy="33" r="7" fill={T} /><path d="M80 27h14v5H80z" fill={G} />
      </svg>
    </div>
  );
}

export default function App() {
  return (
    <div className="flex h-[1009px] w-[1915px] flex-col overflow-hidden bg-[#464646] font-['DejaVu_Sans_Condensed','Noto_Sans',sans-serif] text-[11px] leading-[14px]">
      <TitleBar />
      <MenuBar />
      <Toolbar />
      <div className="flex h-[817px] shrink-0">
        <LayoutStrip />
        <Explorer />
        <WireView />
        <div className="w-1 shrink-0 bg-[#464646]" />
        <ShadedView />
        <CommandPanel />
      </div>
      <Timeline />
      <StatusBar />
    </div>
  );
}
